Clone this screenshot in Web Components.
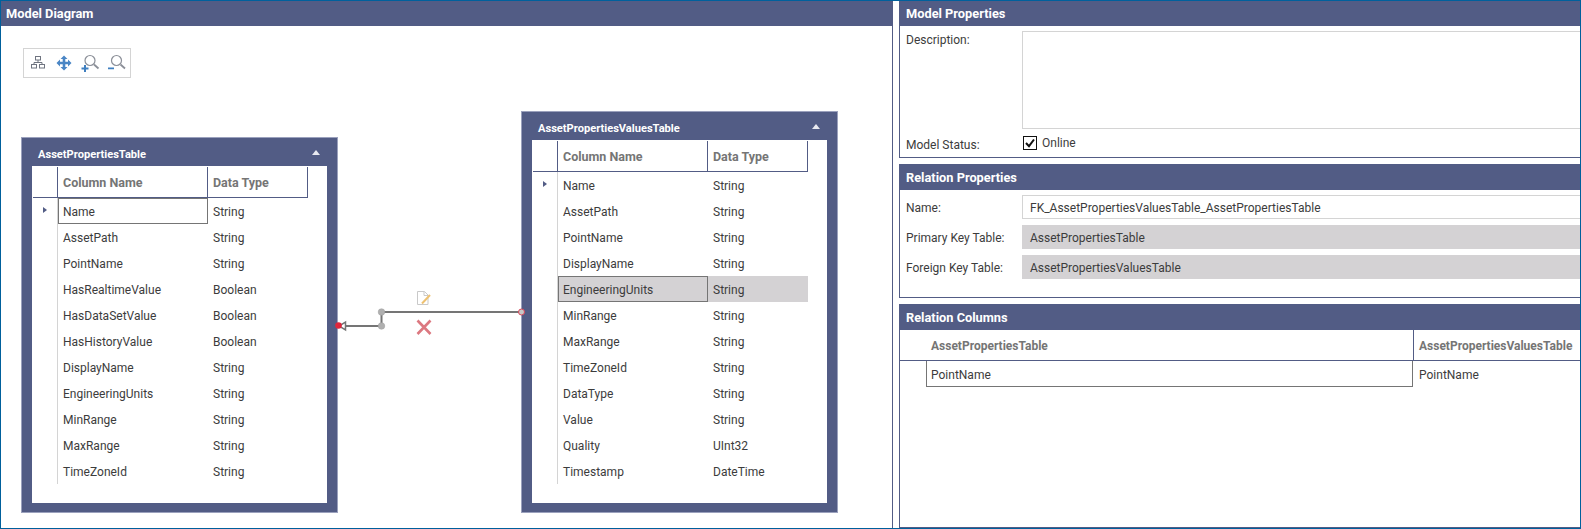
<!DOCTYPE html>
<html>
<head>
<meta charset="utf-8">
<title>Model Diagram</title>
<style>
    html, body { margin: 0; padding: 0; background: #fff; overflow: hidden; }
</style>
</head>
<body>
<model-editor>
    <titled-panel slot="left" heading="Model Diagram" plain>
        <diagram-canvas>
            <diagram-toolbar></diagram-toolbar>
            <entity-table heading="AssetPropertiesTable" style="left:20px;top:111px;width:317px;height:376px"
                selected="0" rows='[["Name","String"],["AssetPath","String"],["PointName","String"],["HasRealtimeValue","Boolean"],["HasDataSetValue","Boolean"],["HasHistoryValue","Boolean"],["DisplayName","String"],["EngineeringUnits","String"],["MinRange","String"],["MaxRange","String"],["TimeZoneId","String"]]'></entity-table>
            <entity-table heading="AssetPropertiesValuesTable" style="left:520px;top:85px;width:317px;height:402px"
                highlight="4" rows='[["Name","String"],["AssetPath","String"],["PointName","String"],["DisplayName","String"],["EngineeringUnits","String"],["MinRange","String"],["MaxRange","String"],["TimeZoneId","String"],["DataType","String"],["Value","String"],["Quality","UInt32"],["Timestamp","DateTime"]]'></entity-table>
            <relation-line></relation-line>
        </diagram-canvas>
    </titled-panel>

    <titled-panel slot="right" heading="Model Properties" style="height:157px">
        <prop-form>
            <span class="lbl" style="height:98px;align-items:flex-start;padding-top:1px">Description:</span>
            <prop-field kind="area" style="height:98px"></prop-field>
            <span class="lbl" style="height:28px;padding-top:3px">Model Status:</span>
            <check-box label="Online" checked></check-box>
        </prop-form>
    </titled-panel>

    <titled-panel slot="right" heading="Relation Properties" style="height:134px">
        <prop-form gap="6">
            <span class="lbl">Name:</span>
            <prop-field>FK_AssetPropertiesValuesTable_AssetPropertiesTable</prop-field>
            <span class="lbl">Primary Key Table:</span>
            <prop-field kind="readonly">AssetPropertiesTable</prop-field>
            <span class="lbl">Foreign Key Table:</span>
            <prop-field kind="readonly">AssetPropertiesValuesTable</prop-field>
        </prop-form>
    </titled-panel>

    <titled-panel slot="right" heading="Relation Columns" style="flex:1">
        <relation-grid></relation-grid>
    </titled-panel>
</model-editor>

<script>
const FONT = 'Roboto, "Noto Sans", Arial, sans-serif';

class ModelEditor extends HTMLElement {
    constructor() {
        super();
        this.attachShadow({ mode: 'open' });
        this.shadowRoot.innerHTML = `
            <style>
                :host { display: flex; box-sizing: border-box; width: 1581px; height: 529px; border: 1px solid #00609c; background: #fff;
                        font: 12px/16px ${FONT}; color: #3c3c3c; }
                .left { display: flex; width: 891px; flex: none; border-right: 1px solid #525c85; }
                .right { display: flex; flex-direction: column; gap: 6px; flex: 1; margin-left: 6px; min-width: 0; }
                ::slotted([slot=left]) { flex: 1; }
            </style>
            <div class="left"><slot name="left"></slot></div>
            <div class="right"><slot name="right"></slot></div>
        `;
    }
}

class TitledPanel extends HTMLElement {
    constructor() {
        super();
        this.attachShadow({ mode: 'open' });
    }

    connectedCallback() {
        this.shadowRoot.innerHTML = `
            <style>
                :host { display: flex; flex-direction: column; box-sizing: border-box; border: 1px solid #525c85; border-right: 0; min-height: 0; }
                :host([plain]) { border: 0; }
                :host([heading="Model Properties"]) { border-top: 0; height: 157px; }
                header { flex: none; height: 25px; background: #525c85; color: #fff; font-size: 12.800px; font-weight: 700; line-height: 26px; padding-left: 6px; }
                :host([plain]) header { padding-left: 5px; }
                .body { flex: 1; position: relative; min-height: 0; }
            </style>
            <header>${this.getAttribute('heading')}</header>
            <div class="body"><slot></slot></div>
        `;
    }
}

class DiagramCanvas extends HTMLElement {
    constructor() {
        super();
        this.attachShadow({ mode: 'open' });
        this.shadowRoot.innerHTML = `
            <style>:host { display: block; position: absolute; inset: 0; }</style>
            <slot></slot>
        `;
    }
}

class DiagramToolbar extends HTMLElement {
    constructor() {
        super();
        this.attachShadow({ mode: 'open' });
        this.shadowRoot.innerHTML = `
            <style>
                :host { position: absolute; left: 22px; top: 22px; display: block; }
                svg { display: block; }
            </style>
            <svg width="108" height="30" viewBox="0 0 108 30">
                <rect x=".5" y=".5" width="107" height="29" fill="#fff" stroke="#d4d4d4"/>
                <g fill="none" stroke="#6f7480">
                    <rect x="12.5" y="8.5" width="5" height="3.5"/>
                    <rect x="8.5" y="16.5" width="5" height="3.5"/>
                    <rect x="16.5" y="16.5" width="5" height="3.5"/>
                    <path d="M15 12v2.5M11 16.5v-2h8v2"/>
                </g>
                <path fill="#4a86c5" d="M41 7.500l3.500 3.500h-2.200v2.700H45v-2.200l3.500 3.500-3.500 3.500v-2.200h-2.700v2.700h2.200l-3.500 3.500-3.500-3.500h2.200v-2.700H37v2.200l-3.500-3.500 3.500-3.500v2.200h2.700V11h-2.200z"/>
                <g fill="none" stroke="#8b8f98" stroke-width="1.2">
                    <circle cx="67" cy="12.5" r="5"/>
                    <path stroke-width="1.8" d="M71 16.5l4.5 4"/>
                    <circle cx="93.500" cy="12.500" r="5"/>
                    <path stroke-width="1.8" d="M97.500 16.500l4.500 4"/>
                </g>
                <path fill="#3f7fc0" d="M61 17h2v2.500h2.500v2H63v2.500h-2v-2.500h-2.500v-2H61zM85 19.500h6v1.800h-6z"/>
            </svg>
        `;
    }
}

class EntityTable extends HTMLElement {
    constructor() {
        super();
        this.attachShadow({ mode: 'open' });
    }

    connectedCallback() {
        const rows = JSON.parse(this.getAttribute('rows'));
        const selected = this.getAttribute('selected');
        const highlight = this.getAttribute('highlight');
        this.shadowRoot.innerHTML = `
            <style>
                :host { position: absolute; display: flex; flex-direction: column; box-sizing: border-box; background: #525c85; border: 1px solid #9ba1bd; padding: 0 10px 9px; }
                .title { flex: none; height: 28px; display: flex; align-items: center; justify-content: space-between; color: #fff; font-size: 11.100px; font-weight: 700; padding: 6px 7px 0 6px; box-sizing: border-box; }
                .caret { width: 0; height: 0; border: 4.500px solid transparent; border-top: 0; border-bottom: 5px solid #e8e9f0; margin-bottom: 5px; }
                .body { flex: 1; background: #fff; padding: 1px 0 0 1px; }
                .grid { display: grid; grid-template-columns: 25px 150px 100px; grid-template-rows: 31px; grid-auto-rows: 26px; width: 275px; }
                .head { height: 31px; box-sizing: border-box; border-bottom: 1px solid #525c85; border-right: 1px solid #525c85; color: #757575; font-size: 12.500px; font-weight: 700; padding-left: 5px; line-height: 32px; }
                .head.stub { padding: 0; }
                .stub-cell { border-right: 1px solid #d4d4d4; box-sizing: border-box; display: flex; align-items: center; justify-content: center; }
                .marker { width: 0; height: 0; border: 3px solid transparent; border-left: 4px solid #525c85; border-right: 0; margin-top: -2px; }
                .cell { padding-left: 5px; line-height: 28px; box-sizing: border-box; }
                .hl { background: #d4d2d4; }
                .sel { border: 1px solid #757575; padding-left: 4px; line-height: 26px; }
            </style>
            <div class="title"><span>${this.getAttribute('heading')}</span><span class="caret"></span></div>
            <div class="body">
                <div class="grid">
                    <div class="head stub"></div>
                    <div class="head">Column Name</div>
                    <div class="head">Data Type</div>
                    ${rows.map((row, i) => {
                        const isSel = String(i) === selected;
                        const isHl = String(i) === highlight;
                        return `
                            <div class="stub-cell">${i === 0 ? '<span class="marker"></span>' : ''}</div>
                            <div class="cell ${isSel || isHl ? 'sel' : ''} ${isHl ? 'hl' : ''}">${row[0]}</div>
                            <div class="cell ${isHl ? 'hl' : ''}">${row[1]}</div>
                        `;
                    }).join('')}
                </div>
            </div>
        `;
    }
}

class RelationLine extends HTMLElement {
    constructor() {
        super();
        this.attachShadow({ mode: 'open' });
        this.shadowRoot.innerHTML = `
            <style>
                :host { position: absolute; left: 329px; top: 254px; display: block; }
                svg { display: block; overflow: visible; }
            </style>
            <svg width="200" height="60" viewBox="0 0 200 60">
                <path fill="none" stroke="#757575" stroke-width="2" d="M14 46h37.500V32H191.500"/>
                <path fill="#fff" stroke="#757575" stroke-width="1.500" d="M15.500 42v8L9 46z"/>
                <circle cx="8.500" cy="45.500" r="3.300" fill="#e0263c"/>
                <circle cx="51.500" cy="46" r="3.300" fill="#b0b0b0" stroke="#a0a0a0" stroke-width=".5"/>
                <circle cx="51.500" cy="32" r="3.300" fill="#b0b0b0" stroke="#a0a0a0" stroke-width=".5"/>
                <circle cx="191.500" cy="32" r="3" fill="#c8c8c8" stroke="#d9475a" stroke-width="1"/>
                <path fill="#fff" stroke="#c9c9c9" d="M87.500 11.500h7l3.500 3.500v9.500h-10.500z"/>
                <path fill="none" stroke="#c9c9c9" d="M94 11.500V15.500h4"/>
                <path fill="none" stroke="#eec170" stroke-width="2" d="M92 23.500l8-8.500"/>
                <path fill="none" stroke="#dc7880" stroke-width="2.600" d="M87.500 40.500l13 13.500M100.500 40.500l-13 13.500"/>
            </svg>
        `;
    }
}

class PropForm extends HTMLElement {
    constructor() {
        super();
        this.attachShadow({ mode: 'open' });
    }

    connectedCallback() {
        const gap = this.getAttribute('gap') || 0;
        this.shadowRoot.innerHTML = `
            <style>
                :host { display: grid; grid-template-columns: 116px 1fr; row-gap: ${gap}px; grid-auto-rows: auto; padding: 5px 0 0 6px; }
                ::slotted(.lbl) { display: flex; align-items: center; box-sizing: border-box; height: 24px; padding-top: 1px; }
            </style>
            <slot></slot>
        `;
    }
}

class PropField extends HTMLElement {
    constructor() {
        super();
        this.attachShadow({ mode: 'open' });
        this.shadowRoot.innerHTML = `
            <style>
                :host { display: flex; align-items: center; box-sizing: border-box; height: 24px; padding: 1px 0 0 7px; border: 1px solid #d4d4d4; border-right: 0; }
                :host([kind=readonly]) { background: #d4d2d4; border-color: #d4d2d4; }
            </style>
            <slot></slot>
        `;
    }
}

class CheckBox extends HTMLElement {
    constructor() {
        super();
        this.attachShadow({ mode: 'open' });
    }

    connectedCallback() {
        this.shadowRoot.innerHTML = `
            <style>
                :host { display: flex; align-items: center; gap: 5px; height: 28px; padding: 0 0 0 1px; }
                svg { display: block; }
            </style>
            <svg width="14" height="14" viewBox="0 0 14 14">
                <rect x=".5" y=".5" width="13" height="13" fill="#fff" stroke="#111"/>
                <path fill="none" stroke="#111" stroke-width="2" d="M3 7l3 3.200L11 3.500"/>
            </svg>
            <span>${this.getAttribute('label')}</span>
        `;
    }
}

class RelationGrid extends HTMLElement {
    constructor() {
        super();
        this.attachShadow({ mode: 'open' });
        this.shadowRoot.innerHTML = `
            <style>
                :host { display: grid; grid-template-columns: 26px 487px 1fr; grid-template-rows: 31px 26px; }
                .h { border-bottom: 1px solid #525c85; color: #757575; font-weight: 700; line-height: 33px; padding-left: 5px; }
                .h.stub { padding: 0; }
                .h.second { border-left: 1px solid #525c85; }
                .sel { box-sizing: border-box; border: 1px solid #757575; border-top: 0; padding-left: 4px; line-height: 28px; }
                .val { padding-left: 6px; line-height: 28px; }
            </style>
            <div class="h stub"></div>
            <div class="h">AssetPropertiesTable</div>
            <div class="h second">AssetPropertiesValuesTable</div>
            <div></div>
            <div class="sel">PointName</div>
            <div class="val">PointName</div>
        `;
    }
}

customElements.define('model-editor', ModelEditor);
customElements.define('titled-panel', TitledPanel);
customElements.define('diagram-canvas', DiagramCanvas);
customElements.define('diagram-toolbar', DiagramToolbar);
customElements.define('entity-table', EntityTable);
customElements.define('relation-line', RelationLine);
customElements.define('prop-form', PropForm);
customElements.define('prop-field', PropField);
customElements.define('check-box', CheckBox);
customElements.define('relation-grid', RelationGrid);
</script>
</body>
</html>
